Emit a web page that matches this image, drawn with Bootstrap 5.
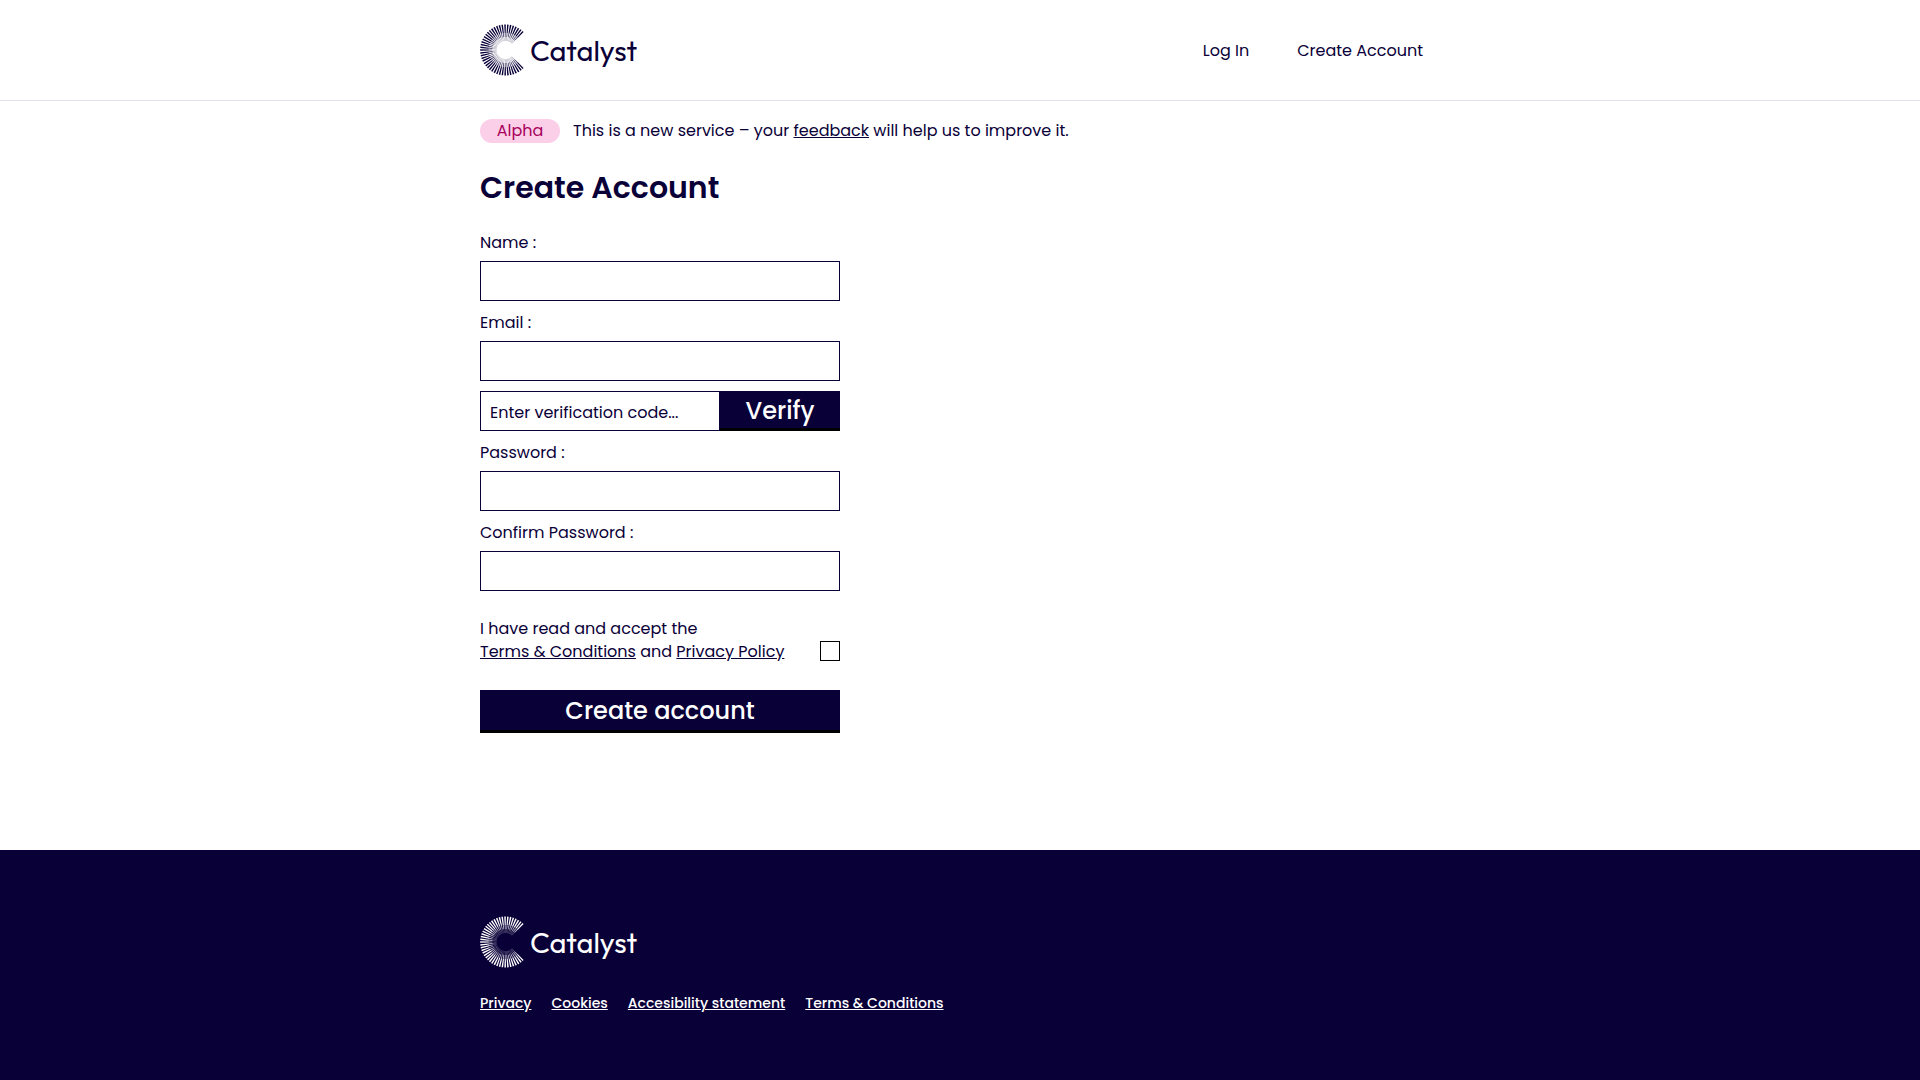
<!DOCTYPE html>
<html lang="en">
<head>
<meta charset="utf-8">
<meta name="viewport" content="width=device-width, initial-scale=1">
<title>Create Account - Catalyst</title>
<link href="https://cdn.jsdelivr.net/npm/bootstrap@5.3.0/dist/css/bootstrap.min.css" rel="stylesheet">
<style>
:root { --navy: #0a0038; }
body {
  font-family: Poppins, Inter, "Open Sans", sans-serif;
  font-size: 16px;
  line-height: 24px;
  color: var(--navy);
  background: #fff;
}
a { color: inherit; }
a:hover { color: #a8005c; }
.page-width { width: 100%; max-width: 960px; margin-inline: auto; }
.site-header { min-height: 101px; border-bottom: 1px solid #e4e2ee; }
.site-logo { width: 160px; height: 52px; display: block; }
.site-logo text { font-family: Outfit, Urbanist, Jost, Lato, sans-serif; font-size: 29px; fill: currentColor; }
.main-nav { gap: 48px; padding: 2px 17px 0 0; }
.service-notice { margin: 18px 0 24px; gap: 13px; }
.alpha-tag { width: 80px; line-height: 24px; font-size: 16px; font-weight: 400; padding: 0; color: #a8005c; background: #fbcfe8; }
.page-title { font-size: 30px; line-height: 42px; font-weight: 600; margin-bottom: 22px; }
.signup-form { max-width: 360px; }
.field-group { margin-bottom: 10px; }
.field-label { line-height: 24px; margin-bottom: 6px; }
.field-box { height: 40px; padding: 2px 9px 0; font-size: 16px; color: var(--navy); border: 1px solid var(--navy); border-radius: 0; }
.field-box::placeholder { color: var(--navy); opacity: 1; }
.btn-navy {
  --bs-btn-color: #fff; --bs-btn-bg: var(--navy);
  --bs-btn-hover-color: #fff; --bs-btn-hover-bg: #1c1058;
  --bs-btn-active-color: #fff; --bs-btn-active-bg: #000;
  border: 0; border-bottom: 3px solid #000; border-radius: 0;
  font-size: 24px; line-height: 38px; font-weight: 500; padding: 2px 0 0;
}
.btn-verify { width: 120px; line-height: 35px; }
.accept-row { margin: 26px 0 27px; line-height: 23px; }
.form-check-input[type="checkbox"].accept-box { width: 20px; height: 20px; margin: 0 0 2px; border: 1px solid #000; border-radius: 0; }
.site-footer { background: var(--navy); padding: 66px 0 65px; }
.footer-links { font-size: 14px; font-weight: 500; gap: 20px; margin-top: 23px; }
</style>
</head>
<body class="d-flex flex-column min-vh-100">
<header class="site-header d-flex align-items-center">
  <div class="page-width d-flex align-items-center justify-content-between">
    <a href="#" class="text-reset text-decoration-none" aria-label="Catalyst">
      <svg class="site-logo" viewBox="0 0 160 52" aria-hidden="true">
        <g id="catalyst-mark" fill="none" stroke="currentColor">
          <path d="M40.6 10.9A21.25 21.25 0 1 0 40.6 41.1" stroke-width="8.5" pathLength="85" stroke-dasharray="1.1 .9"/>
          <path d="M36.1 15.4A15 15 0 1 0 36.1 36.6" stroke-width="4" pathLength="85" stroke-dasharray="1 1" opacity=".75"/>
          <path d="M33.3 18.2A11 11 0 1 0 33.3 33.8" stroke-width="4" pathLength="85" stroke-dasharray=".8 1.2" opacity=".4"/>
        </g>
        <text x="50" y="37">Catalyst</text>
      </svg>
    </a>
    <nav class="main-nav d-flex" aria-label="Main">
      <a href="#" class="text-decoration-none">Log In</a>
      <a href="#" class="text-decoration-none">Create Account</a>
    </nav>
  </div>
</header>

<main class="page-width flex-grow-1">
  <div class="service-notice d-flex align-items-center">
    <span class="badge rounded-pill alpha-tag">Alpha</span>
    <p class="mb-0">This is a new service – your <a href="#">feedback</a> will help us to improve it.</p>
  </div>
  <h1 class="page-title">Create Account</h1>
  <form class="signup-form">
    <div class="field-group">
      <label class="field-label d-block" for="name">Name :</label>
      <input class="form-control field-box" id="name" type="text">
    </div>
    <div class="field-group">
      <label class="field-label d-block" for="email">Email :</label>
      <input class="form-control field-box" id="email" type="email">
    </div>
    <div class="field-group d-flex">
      <input class="form-control field-box flex-fill" type="text" placeholder="Enter verification code..." aria-label="Verification code">
      <button class="btn btn-navy btn-verify flex-shrink-0" type="button">Verify</button>
    </div>
    <div class="field-group">
      <label class="field-label d-block" for="password">Password :</label>
      <input class="form-control field-box" id="password" type="password">
    </div>
    <div>
      <label class="field-label d-block" for="confirm">Confirm Password :</label>
      <input class="form-control field-box" id="confirm" type="password">
    </div>
    <div class="accept-row d-flex justify-content-between align-items-end">
      <label for="accept">I have read and accept the<br><a href="#">Terms &amp; Conditions</a> and <a href="#">Privacy Policy</a></label>
      <input class="form-check-input accept-box" id="accept" type="checkbox">
    </div>
    <button class="btn btn-navy w-100" type="submit">Create account</button>
  </form>
</main>

<footer class="site-footer text-white">
  <div class="page-width">
    <a href="#" class="text-reset text-decoration-none d-block" aria-label="Catalyst">
      <svg class="site-logo" viewBox="0 0 160 52" aria-hidden="true">
        <use href="#catalyst-mark"/>
        <text x="50" y="37">Catalyst</text>
      </svg>
    </a>
    <nav class="footer-links d-flex flex-wrap" aria-label="Footer">
      <a href="#">Privacy</a>
      <a href="#">Cookies</a>
      <a href="#">Accesibility statement</a>
      <a href="#">Terms &amp; Conditions</a>
    </nav>
  </div>
</footer>
<script src="https://cdn.jsdelivr.net/npm/bootstrap@5.3.0/dist/js/bootstrap.bundle.min.js"></script>
</body>
</html>
